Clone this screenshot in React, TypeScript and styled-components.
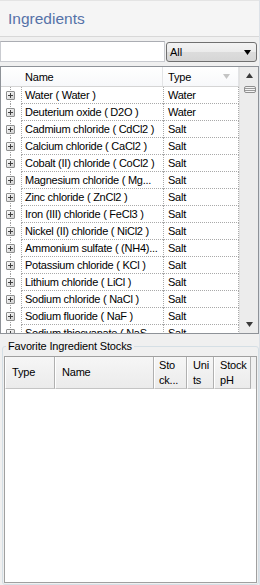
import React from 'react';
import styled, { createGlobalStyle } from 'styled-components';

const GlobalStyle = createGlobalStyle`
  html, body {
    margin: 0;
    padding: 0;
    background: #f0f0f0;
  }
  body {
    font-family: "Liberation Sans", Arial, sans-serif;
    font-size: 11px;
    color: #000;
  }
`;

const Window = styled.div`
  width: 260px;
  height: 585px;
  box-sizing: border-box;
  background: #f0f0f0;
  border-right: 1px solid #dde2e8;
  display: flex;
  flex-direction: column;
  overflow: hidden;
`;

const TitleBar = styled.header`
  flex: none;
  height: 37px;
  box-sizing: border-box;
  background: #f5f5f5;
  border-top: 1px solid #e4e4e4;
  border-bottom: 1px solid #d8d8d8;
  display: flex;
  align-items: center;
  padding: 1px 0 0 8px;
`;

const Title = styled.h1`
  margin: 0;
  font-size: 15.5px;
  font-weight: normal;
  color: #5572a8;
`;

const FilterRow = styled.div`
  flex: none;
  display: flex;
  gap: 1px;
  height: 21px;
  margin-top: 4px;
  padding-right: 2px;
`;

const SearchBox = styled.input`
  width: 165px;
  height: 21px;
  box-sizing: border-box;
  margin: 0;
  border: 1px solid #c9cbd0;
  border-top-color: #abadb3;
  background: #fff;
  font: inherit;
  outline: none;
`;

const Combo = styled.div`
  flex: 1;
  height: 20px;
  margin-top: 1px;
  box-sizing: border-box;
  border: 1px solid #707070;
  border-radius: 3px;
  background: linear-gradient(#f3f3f3, #ebebeb 50%, #dcdcdc 51%, #d6d6d6);
  display: flex;
  align-items: center;
  justify-content: space-between;
  padding: 0 5px 0 3px;
`;

const ListBox = styled.div`
  flex: none;
  width: 259px;
  height: 268px;
  margin-top: 4px;
  box-sizing: border-box;
  border: 1px solid #8e9298;
  background: #fff;
  display: flex;
  overflow: hidden;
`;

const ListMain = styled.div`
  flex: 1;
  display: flex;
  flex-direction: column;
  overflow: hidden;
`;

const ListHeader = styled.div`
  flex: none;
  height: 20px;
  box-sizing: border-box;
  display: grid;
  grid-template-columns: 162px 1fr;
  border-bottom: 1px solid #d5d5d5;
  background: linear-gradient(#ffffff, #f7f8fa);
`;

const HeaderCell = styled.div<{ $indent: number }>`
  display: flex;
  align-items: center;
  justify-content: space-between;
  padding-left: ${({ $indent }) => $indent}px;
  padding-right: 8px;
  border-right: 1px solid #e3e4e6;
  letter-spacing: -0.2px;
`;

const Row = styled.div`
  flex: none;
  height: 17px;
  display: grid;
  grid-template-columns: 20px 142px 1fr;
  line-height: 16px;
  letter-spacing: -0.25px;
`;

const ExpandCell = styled.div`
  position: relative;
  display: flex;
  align-items: center;
  padding-left: 5px;
  &::before {
    content: '';
    position: absolute;
    left: 9px;
    top: 0;
    bottom: 0;
    border-left: 1px dotted #a0a0a0;
  }
`;

const PlusBox = styled.span`
  position: relative;
  width: 9px;
  height: 9px;
  box-sizing: border-box;
  border: 1px solid #8e8f8f;
  border-radius: 1px;
  background: linear-gradient(135deg, #fdfdfd, #cfcfcf);
  &::before,
  &::after {
    content: '';
    position: absolute;
    background: #3f3f3f;
  }
  &::before {
    left: 1px;
    top: 3px;
    width: 5px;
    height: 1px;
  }
  &::after {
    left: 3px;
    top: 1px;
    width: 1px;
    height: 5px;
  }
`;

const Cell = styled.div<{ $pad: number; $right?: boolean }>`
  padding-left: ${({ $pad }) => $pad}px;
  border-left: 1px dotted #a9a9a9;
  border-bottom: 1px dotted #a9a9a9;
  border-right: ${({ $right }) => ($right ? '1px dotted #a9a9a9' : 'none')};
  white-space: nowrap;
  overflow: hidden;
`;

const ScrollBar = styled.div`
  flex: none;
  width: 18px;
  background: #ececec;
  border-left: 1px solid #e2e2e2;
  display: flex;
  flex-direction: column;
  align-items: center;
`;

const ScrollArrow = styled.div`
  flex: none;
  height: 17px;
  display: flex;
  align-items: center;
  justify-content: center;
  width: 100%;
`;

const Thumb = styled.div`
  flex: none;
  width: 12px;
  height: 7px;
  margin-top: 2px;
  margin-left: 1px;
  box-sizing: border-box;
  border: 1px solid #8f8f8f;
  border-radius: 2px;
  background: repeating-linear-gradient(#f4f4f4 0 1px, #9a9a9a 1px 2px);
`;

const Spacer = styled.div`
  flex: 1;
`;

const GroupBox = styled.fieldset`
  flex: 1;
  margin: 6px 0 0 2px;
  width: 257px;
  box-sizing: border-box;
  padding: 3px 1px 1px 1px;
  border: 1px solid #d5dfe5;
  border-radius: 3px;
  display: flex;
  flex-direction: column;
  min-height: 0;
`;

const Legend = styled.legend`
  margin-left: 2px;
  padding: 0 2px;
  line-height: 13px;
  letter-spacing: -0.15px;
`;

const Grid = styled.div`
  flex: 1;
  border: 1px solid #a0a0a0;
  background: #fff;
  display: flex;
  flex-direction: column;
`;

const GridHeader = styled.div`
  flex: none;
  height: 32px;
  display: flex;
  background: #f0f0f0;
`;

const GridHead = styled.div<{ $w: number; $pad: number }>`
  width: ${({ $w }) => $w}px;
  flex: none;
  box-sizing: border-box;
  padding-left: ${({ $pad }) => $pad}px;
  display: flex;
  align-items: center;
  line-height: 15px;
  background: linear-gradient(#f6f6f6, #ebebeb);
  border-left: 1px solid #ffffff;
  border-right: 1px solid #b0b0b0;
  border-bottom: 1px solid #c4c4c4;
  letter-spacing: -0.2px;
`;

const ingredients: [string, string][] = [
  ['Water ( Water )', 'Water'],
  ['Deuterium oxide ( D2O )', 'Water'],
  ['Cadmium chloride ( CdCl2 )', 'Salt'],
  ['Calcium chloride ( CaCl2 )', 'Salt'],
  ['Cobalt (II) chloride ( CoCl2 )', 'Salt'],
  ['Magnesium chloride ( Mg...', 'Salt'],
  ['Zinc chloride ( ZnCl2 )', 'Salt'],
  ['Iron (III) chloride ( FeCl3 )', 'Salt'],
  ['Nickel (II) chloride ( NiCl2 )', 'Salt'],
  ['Ammonium sulfate ( (NH4)...', 'Salt'],
  ['Potassium chloride ( KCl )', 'Salt'],
  ['Lithium chloride ( LiCl )', 'Salt'],
  ['Sodium chloride ( NaCl )', 'Salt'],
  ['Sodium fluoride ( NaF )', 'Salt'],
  ['Sodium thiocyanate ( NaS...', 'Salt'],
];

const stockColumns: { label: React.ReactNode; w: number; pad: number }[] = [
  { label: 'Type', w: 50, pad: 6 },
  { label: 'Name', w: 99, pad: 6 },
  { label: <>Sto<br />ck...</>, w: 33, pad: 4 },
  { label: <>Uni<br />ts</>, w: 27, pad: 5 },
  { label: <>Stock<br />pH</>, w: 37, pad: 5 },
];

const Triangle = ({ dir, color, w = 7 }: { dir: 'up' | 'down'; color: string; w?: number }) => {
  const h = Math.ceil(w / 2) + 1;
  return (
    <svg width={w} height={h} viewBox={`0 0 ${w} ${h}`}>
      {dir === 'down' ? (
        <polygon points={`0,0 ${w},0 ${w / 2},${h}`} fill={color} />
      ) : (
        <polygon points={`0,${h} ${w},${h} ${w / 2},0`} fill={color} />
      )}
    </svg>
  );
};

const App: React.FC = () => {
  return (
    <Window>
      <GlobalStyle />
      <TitleBar>
        <Title>Ingredients</Title>
      </TitleBar>
      <FilterRow>
        <SearchBox />
        <Combo>
          <span>All</span>
          <Triangle dir="down" color="#000" />
        </Combo>
      </FilterRow>
      <ListBox>
        <ListMain>
          <ListHeader>
            <HeaderCell $indent={24}>Name</HeaderCell>
            <HeaderCell $indent={5}>
              Type
              <Triangle dir="down" color="#c4c4c4" w={7} />
            </HeaderCell>
          </ListHeader>
          {ingredients.map(([name, type]) => (
            <Row key={name}>
              <ExpandCell>
                <PlusBox />
              </ExpandCell>
              <Cell $pad={3}>{name}</Cell>
              <Cell $pad={4} $right>{type}</Cell>
            </Row>
          ))}
        </ListMain>
        <ScrollBar>
          <ScrollArrow>
            <Triangle dir="up" color="#3a3a3a" />
          </ScrollArrow>
          <Thumb />
          <Spacer />
          <ScrollArrow>
            <Triangle dir="down" color="#3a3a3a" />
          </ScrollArrow>
        </ScrollBar>
      </ListBox>
      <GroupBox>
        <Legend>Favorite Ingredient Stocks</Legend>
        <Grid>
          <GridHeader>
            {stockColumns.map((c, i) => (
              <GridHead key={i} $w={c.w} $pad={c.pad}>
                <span>{c.label}</span>
              </GridHead>
            ))}
          </GridHeader>
        </Grid>
      </GroupBox>
    </Window>
  );
};

export default App;
